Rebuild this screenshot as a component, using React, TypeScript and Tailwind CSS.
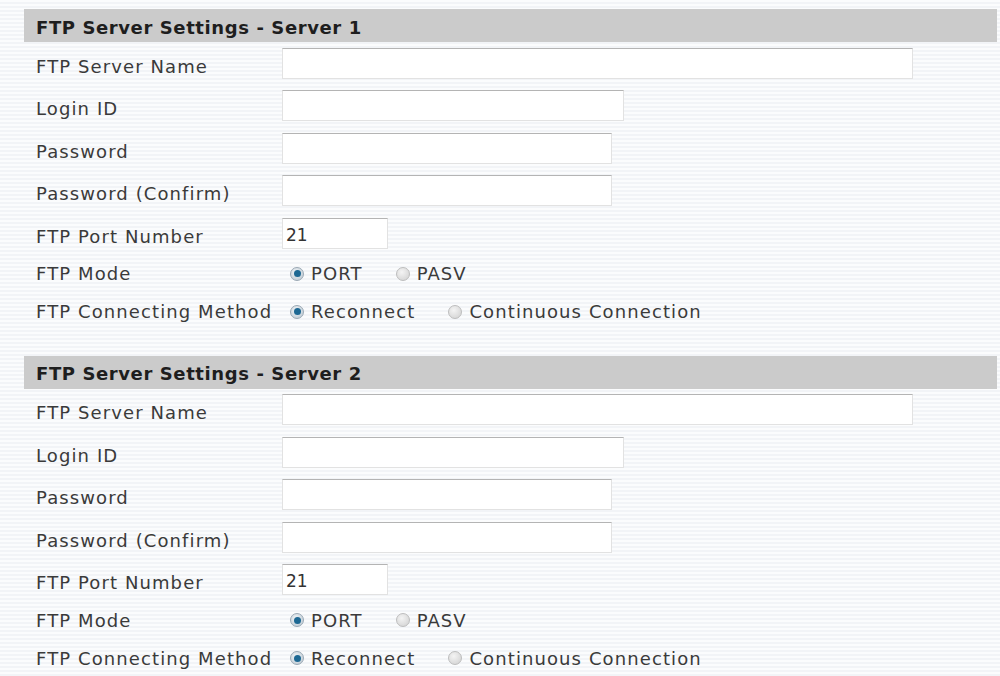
import React from "react";

type Field = { label: string; width: string; value?: string };

const fields: Field[] = [
  { label: "FTP Server Name", width: "w-[631px]" },
  { label: "Login ID", width: "w-[342px]" },
  { label: "Password", width: "w-[330px]" },
  { label: "Password (Confirm)", width: "w-[330px]" },
  { label: "FTP Port Number", width: "w-[106px]", value: "21" },
];

function Radio({ checked }: { checked?: boolean }) {
  return (
    <span
      className={
        checked
          ? "inline-flex items-center justify-center w-[14px] h-[14px] rounded-full bg-[radial-gradient(circle_at_40%_35%,#eef2f5,#b9c6d0)] border border-[#9aa8b4]"
          : "inline-flex items-center justify-center w-[14px] h-[14px] rounded-full bg-[radial-gradient(circle_at_40%_35%,#f4f4f4,#cfcfcf)] border border-[#bdbdbd]"
      }
    >
      {checked && <span className="w-[7px] h-[7px] rounded-full bg-[#1d6893]" />}
    </span>
  );
}

function Section({ n }: { n: number }) {
  return (
    <div>
      <div className="h-[33px] bg-[#cbcbcb] flex items-center pl-3 pt-[3px] font-bold tracking-[0.6px] text-[#1e1e1e]">
        FTP Server Settings - Server {n}
      </div>
      <div className="pl-3">
        {fields.map((f) => (
          <div key={f.label} className="h-[42.5px] flex items-center">
            <div className="w-[246px] pt-[6px]">{f.label}</div>
            <input
              readOnly
              value={f.value ?? ""}
              className={`${f.width} h-[31px] bg-white border border-[#e2e2e2] border-t-[#b4b4b4] px-[3px] pt-[3px] text-[17px] text-[#333] tracking-normal outline-none`}
            />
          </div>
        ))}
        <div className="h-[38px] flex items-center">
          <div className="w-[254px]">FTP Mode</div>
          <div className="flex items-center gap-[7px]">
            <Radio checked />
            <span>PORT</span>
          </div>
          <div className="flex items-center gap-[7px] ml-[33px]">
            <Radio />
            <span>PASV</span>
          </div>
        </div>
        <div className="h-[38px] flex items-center">
          <div className="w-[254px]">FTP Connecting Method</div>
          <div className="flex items-center gap-[7px]">
            <Radio checked />
            <span>Reconnect</span>
          </div>
          <div className="flex items-center gap-[7px] ml-[33px]">
            <Radio />
            <span>Continuous Connection</span>
          </div>
        </div>
      </div>
    </div>
  );
}

export default function App() {
  return (
    <div
      className="w-[1000px] h-[676px] overflow-hidden bg-[repeating-linear-gradient(to_bottom,#fbfcfd_0px,#fbfcfd_2px,#f2f4f7_2px,#f2f4f7_4px)] pt-[9px] pl-[24px] pr-[3px] text-[18px] tracking-[1.1px] text-[#3a3a3a]"
      style={{ fontFamily: '"DejaVu Sans", Verdana, sans-serif' }}
    >
      <Section n={1} />
      <div className="h-[25px]" />
      <Section n={2} />
    </div>
  );
}
